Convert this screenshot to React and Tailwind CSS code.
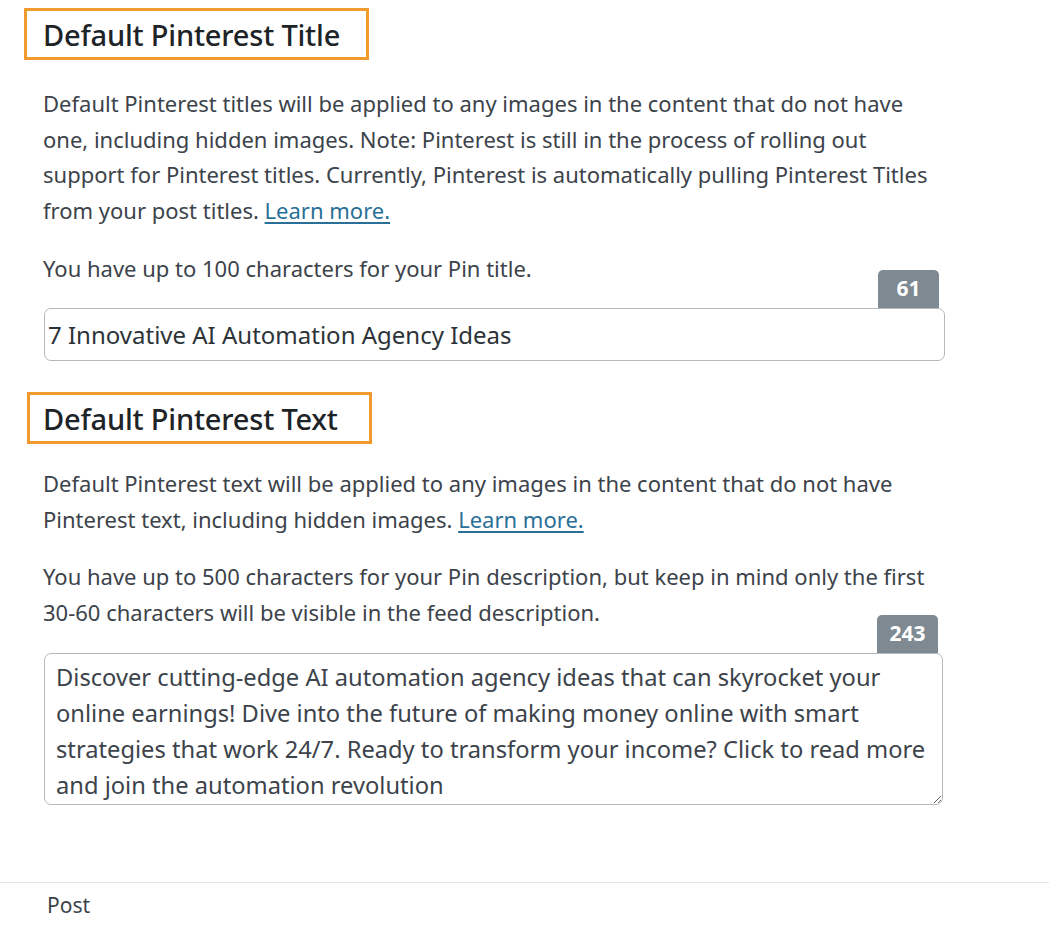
import React from 'react';

const font = { fontFamily: '"Noto Sans", "Open Sans", sans-serif' };

// Orange outlined section heading
const SectionHeading = ({ children, className = '' }) => (
    <div className={`w-[345px] h-[52px] border-[3px] border-[#f19a2e] flex items-center ${className}`}>
        <h2 className="text-[29px] font-medium text-[#1d2327] leading-none tracking-[-0.2px]">{children}</h2>
    </div>
);

const CountBadge = ({ value, className = '' }) => (
    <div className={`flex justify-end pr-[7px] ${className}`}>
        <span className="w-[61px] h-[38px] rounded-t-[5px] bg-[#7e8992] text-white font-bold text-[21px] flex items-center justify-center">
            {value}
        </span>
    </div>
);

const LearnMore = () => (
    <a href="#" className="text-[#2a6f97] underline underline-offset-[3px]">Learn more.</a>
);

export default function App() {
    const description =
        "Discover cutting-edge AI automation agency ideas that can skyrocket your online earnings! Dive into the future of making money online with smart strategies that work 24/7. Ready to transform your income? Click to read more and join the automation revolution";

    return (
        <div className="w-[1049px] h-[925px] bg-white overflow-hidden" style={font}>
            <div className="pl-[43px] pt-[8px] w-[946px]">
                <SectionHeading className="-ml-[19px] pl-[16px]">Default Pinterest Title</SectionHeading>

                <p className="mt-[26px] text-[22px] leading-[35.5px] text-[#3c434a] whitespace-nowrap">
                    Default Pinterest titles will be applied to any images in the content that do not have<br />
                    one, including hidden images. Note: Pinterest is still in the process of rolling out<br />
                    support for Pinterest titles. Currently, Pinterest is automatically pulling Pinterest Titles<br />
                    from your post titles. <LearnMore />
                </p>

                <p className="mt-[22px] text-[22px] leading-[36px] text-[#3c434a]">
                    You have up to 100 characters for your Pin title.
                </p>

                <CountBadge value="61" className="-mt-[16px]" />
                <input
                    type="text"
                    readOnly
                    value="7 Innovative AI Automation Agency Ideas"
                    className="block ml-[1px] w-[901px] h-[53px] border border-[#b4b8bc] rounded-[7px] pl-[3px] pr-[4px] text-[24px] text-[#2c3338] outline-none"
                    style={font}
                />

                <div className="mt-[31px]">
                    <SectionHeading className="-ml-[16px] pl-[13px]">Default Pinterest Text</SectionHeading>
                </div>

                <p className="mt-[22px] text-[22px] leading-[35.5px] text-[#3c434a] whitespace-nowrap">
                    Default Pinterest text will be applied to any images in the content that do not have<br />
                    Pinterest text, including hidden images. <LearnMore />
                </p>

                <p className="mt-[22px] text-[22px] leading-[35.5px] text-[#3c434a] whitespace-nowrap">
                    You have up to 500 characters for your Pin description, but keep in mind only the first<br />
                    30-60 characters will be visible in the feed description.
                </p>

                <CountBadge value="243" className="-mt-[15px] pr-[8px]" />
                <textarea
                    readOnly
                    value={description}
                    className="block ml-[1px] w-[899px] h-[152px] border border-[#b4b8bc] rounded-[7px] pl-[11px] pr-[4px] pt-[5px] pb-[1px] text-[23.7px] leading-[36px] text-[#3c434a] outline-none resize overflow-hidden"
                    style={font}
                />
            </div>

            <div className="mt-[77px] border-t border-[#e4e4e4] pl-[47px] pt-[7px]">
                <span className="text-[21px] text-[#3c434a]">Post</span>
            </div>
        </div>
    );
}
